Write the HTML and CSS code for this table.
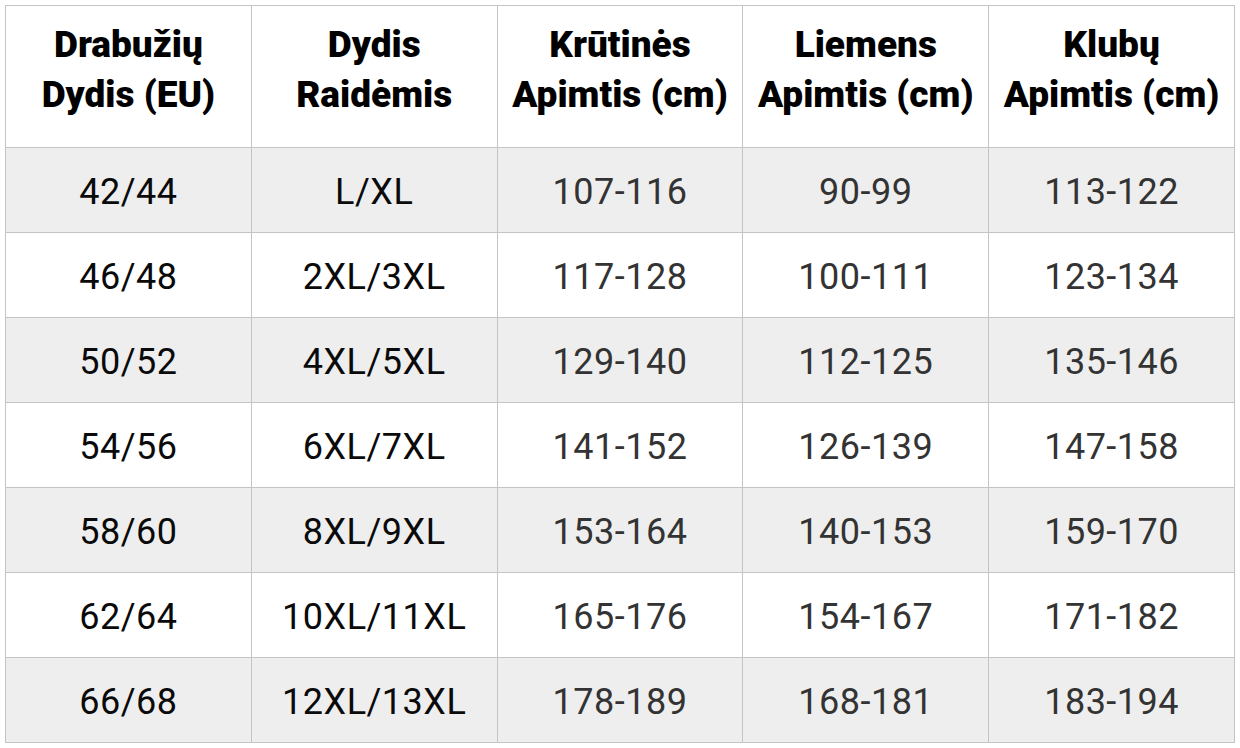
FILE: index.html
```html
<!DOCTYPE html>
<html lang="lt">
<head>
<meta charset="utf-8">
<title>Dydžių lentelė</title>
<link rel="stylesheet" href="styles.css">
</head>
<body>
<table class="size-table">
  <thead>
    <tr>
      <th>Drabužių<br>Dydis (EU)</th>
      <th>Dydis<br>Raidėmis</th>
      <th>Krūtinės<br>Apimtis (cm)</th>
      <th>Liemens<br>Apimtis (cm)</th>
      <th>Klubų<br>Apimtis (cm)</th>
    </tr>
  </thead>
  <tbody>
    <tr><td class="dark">42/44</td><td class="dark">L/XL</td><td>107-116</td><td>90-99</td><td>113-122</td></tr>
    <tr><td class="dark">46/48</td><td class="dark">2XL/3XL</td><td>117-128</td><td>100-111</td><td>123-134</td></tr>
    <tr><td class="dark">50/52</td><td class="dark">4XL/5XL</td><td>129-140</td><td>112-125</td><td>135-146</td></tr>
    <tr><td class="dark">54/56</td><td class="dark">6XL/7XL</td><td>141-152</td><td>126-139</td><td>147-158</td></tr>
    <tr><td class="dark">58/60</td><td class="dark">8XL/9XL</td><td>153-164</td><td>140-153</td><td>159-170</td></tr>
    <tr><td class="dark">62/64</td><td class="dark">10XL/11XL</td><td>165-176</td><td>154-167</td><td>171-182</td></tr>
    <tr><td class="dark">66/68</td><td class="dark">12XL/13XL</td><td>178-189</td><td>168-181</td><td>183-194</td></tr>
  </tbody>
</table>
</body>
</html>
```

FILE: styles.css
```css
html, body {
  margin: 0;
  padding: 0;
  background: #ffffff;
}

body {
  padding: 5px;
  font-family: Roboto, "Liberation Sans", sans-serif;
}

.size-table {
  width: 1230px;
  border-collapse: collapse;
  table-layout: fixed;
}

.size-table th,
.size-table td {
  border: 1px solid #c4c4c4;
  text-align: center;
  vertical-align: middle;
  padding: 0;
}

.size-table th {
  height: 127px;
  padding-bottom: 14px;
  font-size: 37px;
  font-weight: 900;
  line-height: 50px;
  color: #000000;
}

.size-table td {
  height: 80px;
  padding-top: 4px;
  font-size: 36px;
  font-weight: 400;
  color: #333333;
  letter-spacing: 0.5px;
}

.size-table td.dark {
  color: #0a0a0a;
}

.size-table tbody tr:nth-child(odd) td {
  background: #eeeeee;
}
```
